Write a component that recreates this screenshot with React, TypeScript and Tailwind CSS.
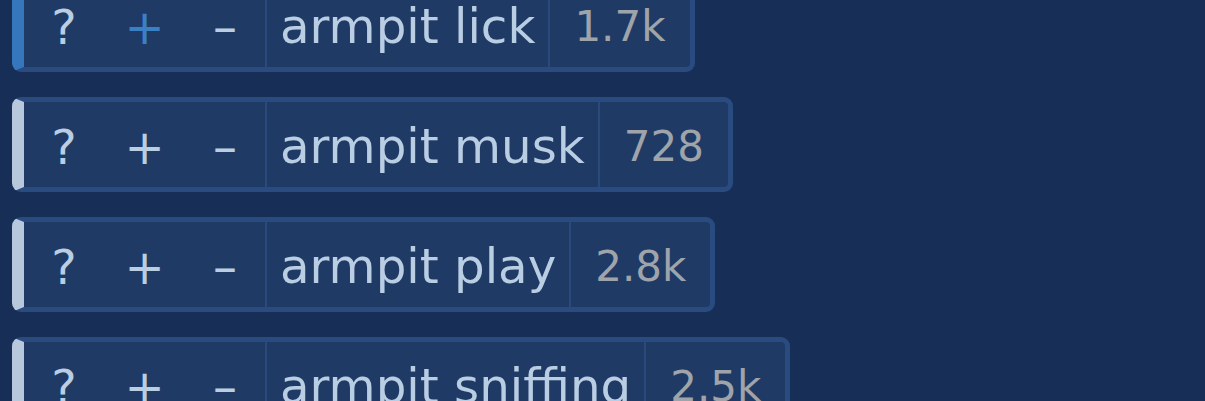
import { ReactElement } from "react";

type Tag = {
  name: string;
  count: string;
  active?: boolean;
};

const tags: Tag[] = [
  { name: "armpit lick", count: "1.7k", active: true },
  { name: "armpit musk", count: "728" },
  { name: "armpit play", count: "2.8k" },
  { name: "armpit sniffing", count: "2.5k" },
];

const TagRow = ({ tag }: { tag: Tag }): ReactElement => {
  return (
    <div
      className={
        "flex h-[95px] items-stretch self-start rounded-[9px] border-[5px] border-[#2a4b80] border-l-[12px] bg-[#203a66] " +
        (tag.active ? "border-l-[#3576bc]" : "border-l-[#b8c8dc]")
      }
    >
      <div className="flex w-[241px] items-center pt-[4px]">
        <button className="flex h-full w-[80px] items-center justify-center text-[#b9cde3]">?</button>
        <button
          className={
            "flex h-full w-[81px] items-center justify-center " +
            (tag.active ? "text-[#3b7fc4]" : "text-[#b9cde3]")
          }
        >
          +
        </button>
        <button className="flex h-full w-[80px] items-center justify-center text-[#b9cde3]">–</button>
      </div>
      <div className="w-[2px] bg-[#2a4a7c]" />
      <div className="flex items-center px-[13px] pt-[4px] text-[48.3px] text-[#b9cde3]">{tag.name}</div>
      <div className="w-[2px] bg-[#2a4a7c]" />
      <div className="flex items-center pl-[24px] pr-[24px] pt-[4px] text-[42px] text-[#9fa4aa]">{tag.count}</div>
    </div>
  );
};

export default function App() {
  return (
    <div
      className="h-[401px] w-[1205px] overflow-hidden bg-[#172e57] text-[48px] leading-none"
      style={{ fontFamily: '"DejaVu Sans", Verdana, sans-serif' }}
    >
      <div className="mt-[-23px] flex flex-col gap-[25px] pl-[12px]">
        {tags.map((tag) => (
          <TagRow key={tag.name} tag={tag} />
        ))}
      </div>
    </div>
  );
}
